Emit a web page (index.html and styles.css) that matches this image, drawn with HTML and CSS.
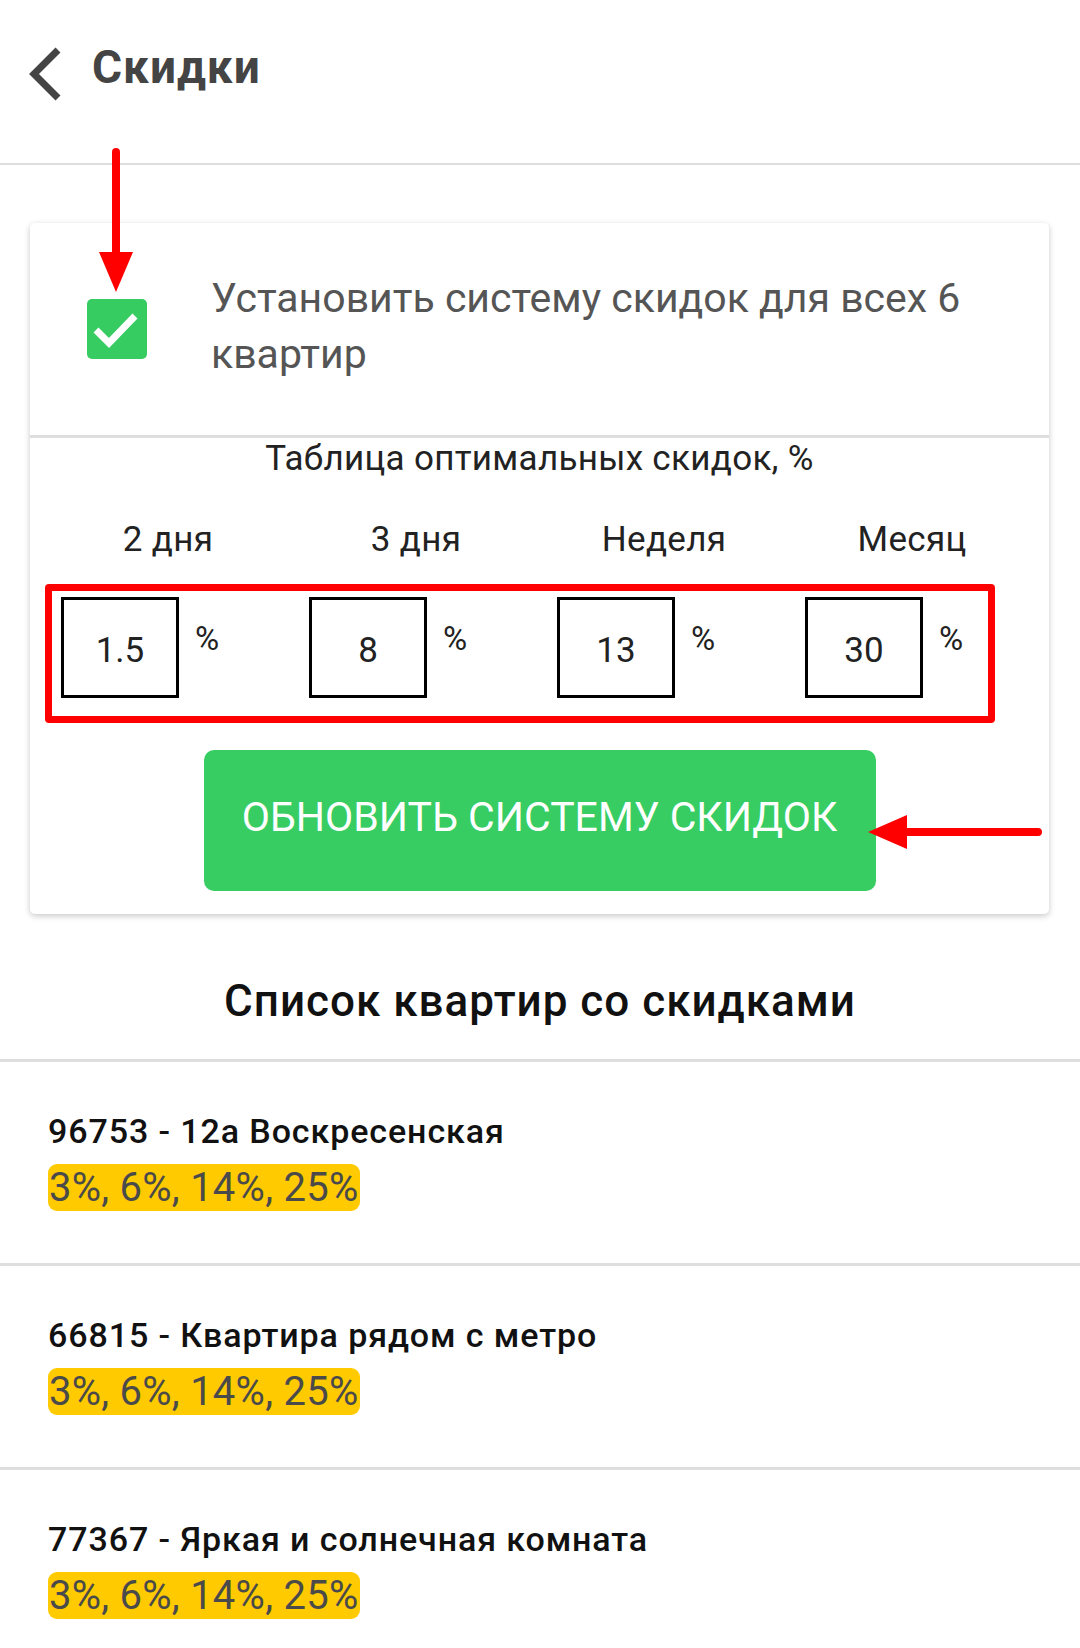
FILE: index.html
```html
<!DOCTYPE html>
<html lang="ru">
<head>
<meta charset="utf-8">
<title>Скидки</title>
<link rel="stylesheet" href="styles.css">
</head>
<body>
<header class="topbar">
  <svg class="back" width="34" height="54" viewBox="0 0 34 54"><polyline points="30,3 6,27 30,51" fill="none" stroke="#444" stroke-width="7"/></svg>
  <h1 class="title">Скидки</h1>
</header>

<main class="main">
  <section class="card">
    <div class="check-row">
      <div class="checkbox">
        <svg width="60" height="60" viewBox="0 0 60 60"><polyline points="9,31 22,44 48,17" fill="none" stroke="#fff" stroke-width="7"/></svg>
      </div>
      <div class="check-text">Установить систему скидок для всех 6 квартир</div>
    </div>
    <div class="table-title">Таблица оптимальных скидок, %</div>
    <div class="labels">
      <div class="label">2 дня</div>
      <div class="label">3 дня</div>
      <div class="label">Неделя</div>
      <div class="label">Месяц</div>
    </div>
    <div class="highlight">
      <div class="fields">
        <div class="cell"><div class="field">1.5</div><span class="pct">%</span></div>
        <div class="cell"><div class="field">8</div><span class="pct">%</span></div>
        <div class="cell"><div class="field">13</div><span class="pct">%</span></div>
        <div class="cell"><div class="field">30</div><span class="pct">%</span></div>
      </div>
    </div>
    <button class="update">Обновить систему скидок</button>
  </section>

  <h2 class="list-title">Список квартир со скидками</h2>
  <ul class="list">
    <li class="item">
      <div class="item-name">96753 - 12а Воскресенская</div>
      <span class="badge">3%, 6%, 14%, 25%</span>
    </li>
    <li class="item">
      <div class="item-name">66815 - Квартира рядом с метро</div>
      <span class="badge">3%, 6%, 14%, 25%</span>
    </li>
    <li class="item">
      <div class="item-name">77367 - Яркая и солнечная комната</div>
      <span class="badge">3%, 6%, 14%, 25%</span>
    </li>
  </ul>
</main>

<svg class="arrow-down" width="40" height="152" viewBox="0 0 40 152"><line x1="20" y1="8" x2="20" y2="112" stroke="#ff0000" stroke-width="8" stroke-linecap="round"/><polygon points="3,108 37,108 20,148" fill="#ff0000"/></svg>
<svg class="arrow-left" width="184" height="44" viewBox="0 0 184 44"><line x1="40" y1="22" x2="176" y2="22" stroke="#ff0000" stroke-width="8" stroke-linecap="round"/><polygon points="6,22 45,5 45,39" fill="#ff0000"/></svg>
</body>
</html>
```

FILE: styles.css
```css
* { box-sizing: border-box; }
html, body { margin: 0; padding: 0; }
body {
  position: relative;
  width: 1080px;
  min-height: 1648px;
  background: #fff;
  font-family: Roboto, "Noto Sans", sans-serif;
  color: #222;
  overflow: hidden;
}

.topbar {
  height: 165px;
  border-bottom: 2px solid #dedede;
  display: flex;
  align-items: flex-start;
  padding: 40px 0 0 28px;
}
.back { margin-top: 7px; flex: none; }
.title {
  margin: 0 0 0 30px;
  font-size: 46px;
  line-height: 54px;
  font-weight: 700;
  letter-spacing: 1px;
  color: #444;
}

.main { padding-top: 58px; }

.card {
  margin: 0 31px 0 30px;
  background: #fff;
  border-radius: 5px;
  box-shadow: 0 2px 6px rgba(0,0,0,0.22);
  padding-bottom: 23px;
}
.check-row {
  display: flex;
  align-items: center;
  padding: 47px 40px 53px 57px;
  border-bottom: 3px solid #dedede;
}
.checkbox {
  flex: none;
  width: 60px;
  height: 60px;
  margin-top: 6px;
  border-radius: 5px;
  background: #36cc62;
}
.checkbox svg { display: block; }
.check-text {
  margin-left: 64px;
  font-size: 41px;
  line-height: 56px;
  color: #555;
}
.table-title {
  margin-top: 2px;
  text-align: center;
  font-size: 35px;
  line-height: 38px;
  letter-spacing: 0.3px;
  color: #222;
}
.labels {
  margin: 42px 0 0 14px;
  display: grid;
  grid-template-columns: repeat(4, 248px);
}
.label {
  text-align: center;
  font-size: 35px;
  line-height: 40px;
  letter-spacing: 0.3px;
  color: #222;
}
.highlight {
  margin: 24px 0 0 15px;
  width: 950px;
  height: 139px;
  border: 7px solid #ff0000;
  border-radius: 4px;
  padding: 6px 26px 18px 9px;
}
.fields {
  display: flex;
  gap: 91px;
}
.cell {
  display: flex;
  align-items: flex-start;
  width: 157px;
}
.field {
  flex: none;
  width: 118px;
  height: 101px;
  border: 3px solid #000;
  display: flex;
  align-items: center;
  justify-content: center;
  padding-top: 6px;
  font-size: 35px;
  line-height: 41px;
  color: #222;
}
.pct {
  margin: 22px 0 0 16px;
  font-size: 33px;
  line-height: 40px;
  color: #222;
}
.update {
  display: flex;
  align-items: center;
  justify-content: center;
  margin: 27px auto 0;
  width: 672px;
  height: 141px;
  padding: 0 0 8px;
  border: none;
  border-radius: 10px;
  background: #37cd63;
  color: #fff;
  font-family: Roboto, "Noto Sans", sans-serif;
  font-size: 41px;
  line-height: 48px;
  text-transform: uppercase;
}

.list-title {
  margin: 63px 0 33px;
  text-align: center;
  font-size: 44px;
  line-height: 49px;
  font-weight: 500;
  letter-spacing: 1px;
  color: #111;
}
.list {
  list-style: none;
  margin: 0;
  padding: 0;
  border-top: 3px solid #dedede;
}
.item {
  padding: 50px 48px 52px;
  border-bottom: 3px solid #dedede;
}
.item-name {
  font-size: 34px;
  line-height: 39px;
  font-weight: 500;
  letter-spacing: 0.9px;
  color: #111;
}
.badge {
  display: inline-block;
  margin-top: 13px;
  padding: 0 2px 0 1px;
  height: 47px;
  font-size: 40px;
  line-height: 47px;
  letter-spacing: 0.25px;
  color: #4a4a4a;
  background: #ffcb00;
  border-radius: 9px;
}

.arrow-down { position: absolute; left: 96px; top: 144px; }
.arrow-left { position: absolute; left: 862px; top: 810px; }
```
